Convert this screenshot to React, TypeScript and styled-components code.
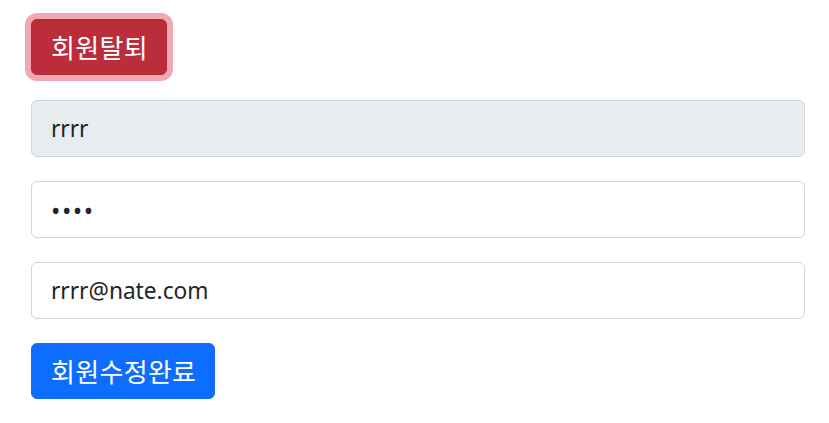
import React from 'react';
import styled, { createGlobalStyle } from 'styled-components';

const GlobalStyle = createGlobalStyle`
  body {
    margin: 0;
    background: #fff;
    font-family: "Noto Sans", "Noto Sans CJK KR", sans-serif;
    color: #212529;
  }
`;

const Page = styled.div`
  padding: 19px 24px 0 31px;
`;

const Button = styled.button<{ $variant: 'danger' | 'primary'; $focused?: boolean }>`
  display: inline-block;
  font-family: "Noto Sans CJK KR", "Noto Sans", sans-serif;
  font-size: 26px;
  line-height: 36px;
  letter-spacing: 0.3px;
  padding: 9px 18px 9px 19px;
  border: 1px solid transparent;
  border-radius: 6px;
  color: #fff;
  cursor: pointer;
  background: ${({ $variant }) => ($variant === 'danger' ? '#bb2d3b' : '#0d6efd')};
  border-color: ${({ $variant }) => ($variant === 'danger' ? '#b02a37' : '#0d6efd')};
  box-shadow: ${({ $focused }) => ($focused ? '0 0 0 6px rgba(225, 83, 97, 0.5)' : 'none')};
`;

const Form = styled.form`
  margin-top: 25px;
`;

const Field = styled.div`
  margin-bottom: 24px;
`;

const Input = styled.input<{ $secret?: boolean }>`
  display: block;
  box-sizing: border-box;
  width: 100%;
  height: 57px;
  padding: 0 19px;
  font-family: "Noto Sans", "Noto Sans CJK KR", sans-serif;
  font-size: ${({ $secret }) => ($secret ? '25px' : '22.7px')};
  letter-spacing: ${({ $secret }) => ($secret ? '1.5px' : 'normal')};
  color: #212529;
  background: #fff;
  border: 1px solid #ced4da;
  border-radius: 6px;
  outline: none;

  &:disabled {
    background: #e9ecef;
    opacity: 1;
    color: #212529;
  }
`;

export default function App() {
  return (
    <>
      <GlobalStyle />
      <Page>
        <Button $variant="danger" $focused type="button">회원탈퇴</Button>
        <Form onSubmit={(e) => e.preventDefault()}>
          <Field>
            <Input type="text" value="rrrr" disabled readOnly />
          </Field>
          <Field>
            <Input type="password" value="rrrr" $secret readOnly />
          </Field>
          <Field>
            <Input type="email" value="rrrr@nate.com" readOnly />
          </Field>
          <Button $variant="primary" type="submit">회원수정완료</Button>
        </Form>
      </Page>
    </>
  );
}
